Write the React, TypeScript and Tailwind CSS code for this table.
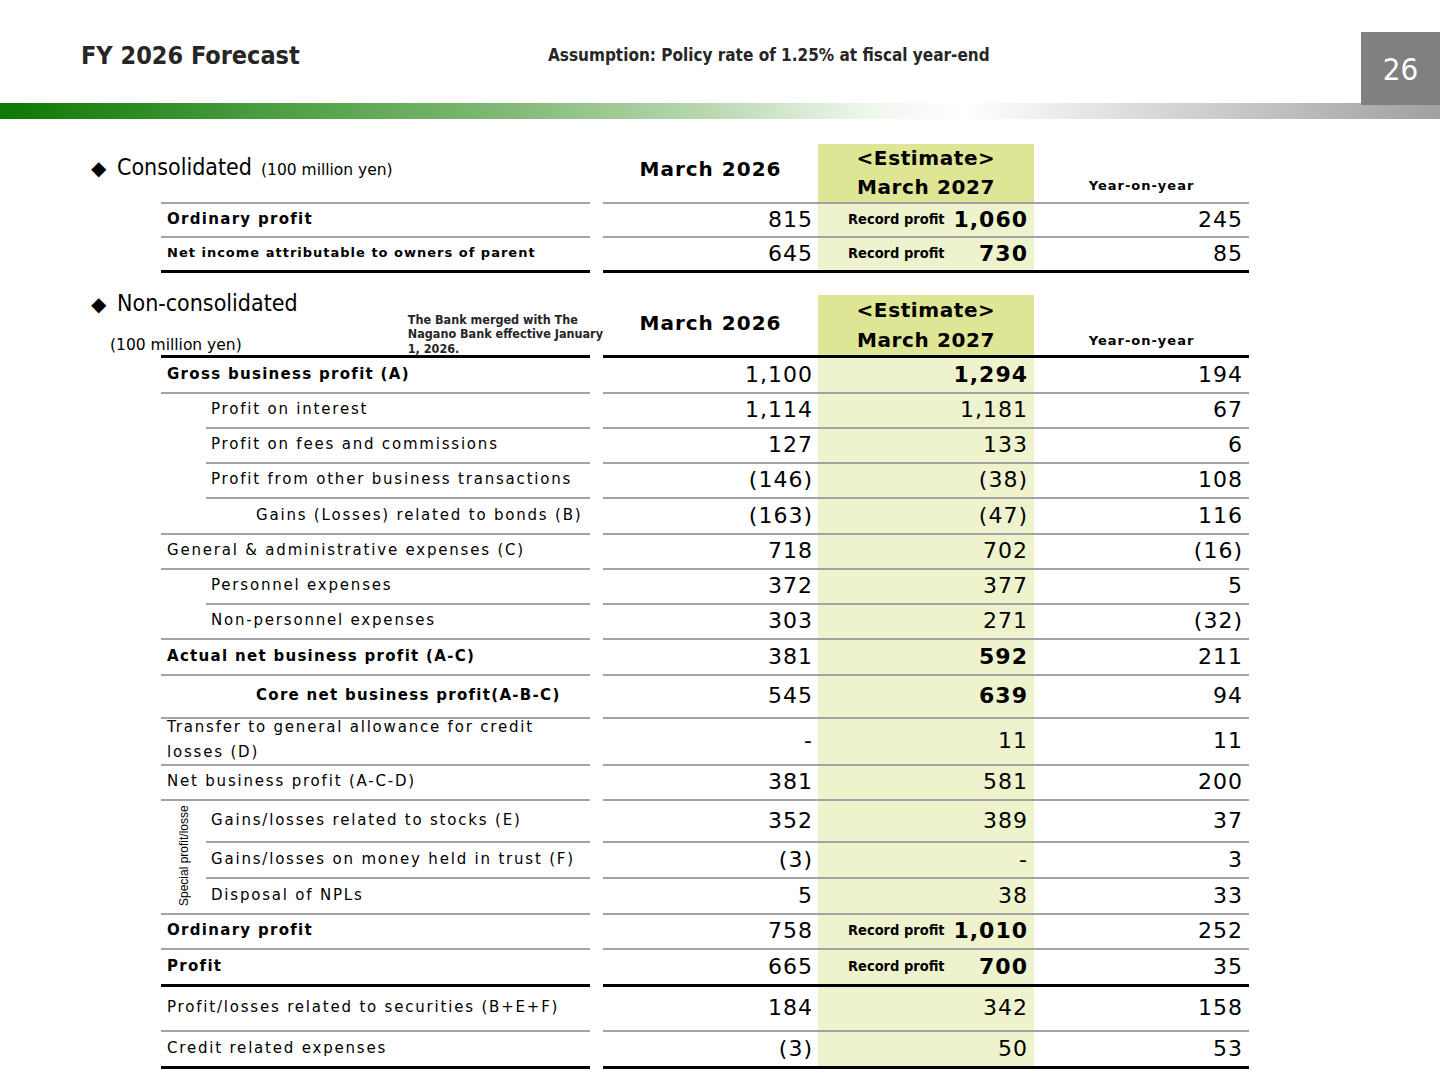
import React, { ReactNode } from "react";

const BODY = "font-['DejaVu_Sans',sans-serif]";
const COND = "font-['DejaVu_Sans_Condensed','DejaVu_Sans',sans-serif]";

type Sep = "g0" | "g45" | "b0";
type RowDef = {
  label: ReactNode;
  indent: 0 | 1 | 2;
  bold?: boolean;
  h: string;
  v: [string, string, string];
  bold2?: boolean;
  record?: boolean;
  sep: Sep;
  labelClass?: string;
};

function Separator({ kind }: { kind: Sep }) {
  const black = kind === "b0";
  return (
    <div className={black ? "flex h-[3px]" : "flex h-[2px]"}>
      <div className={kind === "g45" ? "flex-1 pl-[45px]" : "flex-1"}>
        <div className={black ? "h-full bg-black" : "h-full bg-[#a3a3a3]"} />
      </div>
      <div className="w-[13px]" />
      <div className={black ? "w-[646px] bg-black" : "w-[646px] bg-[#a3a3a3]"} />
    </div>
  );
}

function Row({ r, inGroup }: { r: RowDef; inGroup?: boolean }) {
  const indentCls = inGroup
    ? "pl-[5px]"
    : r.indent === 0
    ? "pl-[6px]"
    : r.indent === 1
    ? "pl-[50px]"
    : "pl-[95px]";
  const labelFont =
    r.labelClass ??
    (r.bold
      ? "text-[15px] font-bold tracking-[1.3px]"
      : "text-[15px] tracking-[1.8px]");
  return (
    <div className={`flex ${r.h}`}>
      <div className={`flex-1 flex items-center pb-[2px] ${indentCls} ${labelFont} text-black`}>
        {r.label}
      </div>
      <div className="w-[13px]" />
      <div className="w-[215px] flex items-center justify-end pr-[5px] pb-[2px] text-[22px] tracking-[1px] text-black">
        {r.v[0]}
      </div>
      <div
        className={
          r.record
            ? "w-[216px] bg-[#eef3ce] flex items-center justify-between pl-[30px] pr-[6px] pb-[2px] text-black"
            : "w-[216px] bg-[#eef3ce] flex items-center justify-end pr-[6px] pb-[2px] text-black"
        }
      >
        {r.record && (
          <span className={`${COND} text-[14.5px] font-bold tracking-[0px] pt-[1px]`}>
            Record profit
          </span>
        )}
        <span
          className={
            r.bold2
              ? "text-[22px] font-bold tracking-[1px]"
              : "text-[22px] tracking-[1px]"
          }
        >
          {r.v[1]}
        </span>
      </div>
      <div className="w-[215px] flex items-center justify-end pr-[6px] pb-[2px] text-[22px] tracking-[1px] text-black">
        {r.v[2]}
      </div>
    </div>
  );
}

const consolidated: RowDef[] = [
  {
    label: "Ordinary profit",
    indent: 0,
    bold: true,
    h: "h-[32px]",
    v: ["815", "1,060", "245"],
    bold2: true,
    record: true,
    sep: "g0",
  },
  {
    label: "Net income attributable to owners of parent",
    indent: 0,
    h: "h-[32px]",
    v: ["645", "730", "85"],
    bold2: true,
    record: true,
    sep: "b0",
    labelClass: "text-[13px] font-bold tracking-[1px]",
  },
];

const nonA: RowDef[] = [
  { label: "Gross business profit (A)", indent: 0, bold: true, h: "h-[34px]", v: ["1,100", "1,294", "194"], bold2: true, sep: "g0" },
  { label: "Profit on interest", indent: 1, h: "h-[33px]", v: ["1,114", "1,181", "67"], sep: "g45" },
  { label: "Profit on fees and commissions", indent: 1, h: "h-[33px]", v: ["127", "133", "6"], sep: "g45" },
  { label: "Profit from other business transactions", indent: 1, h: "h-[33px]", v: ["(146)", "(38)", "108"], sep: "g45" },
  { label: "Gains (Losses) related to bonds (B)", indent: 2, h: "h-[34px]", v: ["(163)", "(47)", "116"], sep: "g0" },
  { label: "General & administrative expenses (C)", indent: 0, h: "h-[33px]", v: ["718", "702", "(16)"], sep: "g0" },
  { label: "Personnel expenses", indent: 1, h: "h-[33px]", v: ["372", "377", "5"], sep: "g45" },
  { label: "Non-personnel expenses", indent: 1, h: "h-[33px]", v: ["303", "271", "(32)"], sep: "g0" },
  { label: "Actual net business profit (A-C)", indent: 0, bold: true, h: "h-[34px]", v: ["381", "592", "211"], bold2: true, sep: "g0" },
  { label: "Core net business profit(A-B-C)", indent: 2, bold: true, h: "h-[41px]", v: ["545", "639", "94"], bold2: true, sep: "g0" },
  {
    label: (
      <span className="leading-[25px] -mt-[2px]">
        Transfer to general allowance for credit
        <br />
        losses (D)
      </span>
    ),
    indent: 0,
    h: "h-[45px]",
    v: ["-", "11", "11"],
    sep: "g0",
  },
  { label: "Net business profit (A-C-D)", indent: 0, h: "h-[33px]", v: ["381", "581", "200"], sep: "g0" },
];

const special: RowDef[] = [
  { label: "Gains/losses related to stocks (E)", indent: 1, h: "h-[40px]", v: ["352", "389", "37"], sep: "g0" },
  { label: "Gains/losses on money held in trust (F)", indent: 1, h: "h-[34px]", v: ["(3)", "-", "3"], sep: "g0" },
  { label: "Disposal of NPLs", indent: 1, h: "h-[34px]", v: ["5", "38", "33"], sep: "g0" },
];

const nonB: RowDef[] = [
  { label: "Ordinary profit", indent: 0, bold: true, h: "h-[33px]", v: ["758", "1,010", "252"], bold2: true, record: true, sep: "g0" },
  { label: "Profit", indent: 0, bold: true, h: "h-[34px]", v: ["665", "700", "35"], bold2: true, record: true, sep: "b0" },
  { label: "Profit/losses related to securities (B+E+F)", indent: 0, h: "h-[43px]", v: ["184", "342", "158"], sep: "g0" },
  { label: "Credit related expenses", indent: 0, h: "h-[34px]", v: ["(3)", "50", "53"], sep: "b0" },
];

function Rows({ rows }: { rows: RowDef[] }) {
  return (
    <>
      {rows.map((r, i) => (
        <React.Fragment key={i}>
          <Row r={r} />
          <Separator kind={r.sep} />
        </React.Fragment>
      ))}
    </>
  );
}

export default function App() {
  return (
    <div className={`w-[1440px] h-[1080px] bg-white overflow-hidden ${BODY}`}>
      {/* Title bar */}
      <div className="flex h-[103px]">
        <div className={`w-[548px] pl-[81px] pt-[41px] ${COND} text-[25px] font-bold leading-[30px] text-[#262626]`}>
          FY 2026 Forecast
        </div>
        <div className={`pt-[46px] ${COND} text-[17px] font-bold leading-[18px] text-[#262626]`}>
          Assumption: Policy rate of 1.25% at fiscal year-end
        </div>
        <div className={`ml-auto mt-[32px] w-[79px] h-[73px] relative z-10 bg-[#808080] flex items-center justify-center pt-[2px] ${COND} text-[31px] text-white`}>
          26
        </div>
      </div>
      <div className="h-[16px] bg-[linear-gradient(to_right,#0d7803_0%,#4a9c40_18%,#80b975_35%,#bcdab4_50%,#eef6ec_60%,#ffffff_67%,#dedede_78%,#a0a0a0_100%)]" />

      {/* Consolidated */}
      <div className="pl-[92px]">
        <div className="flex h-[58px] mt-[25px]">
          <div className="w-[511px] pt-[10px]">
            <div className="flex items-baseline leading-[26px] text-black">
              <span className="w-[26px] text-[20px] -ml-[1px]">◆</span>
              <span className={`${COND} text-[23px]`}>Consolidated</span>
              <span className="ml-[9px] text-[15.5px]">(100 million yen)</span>
            </div>
          </div>
          <div className="w-[215px] pt-[14px] text-center text-[20px] font-bold tracking-[1px] leading-[22px] text-black">
            March 2026
          </div>
          <div className="w-[216px] bg-[#dee696] text-center text-[20px] font-bold tracking-[0.6px] leading-[29px] text-black">
            <div>&lt;Estimate&gt;</div>
            <div>March 2027</div>
          </div>
          <div className="w-[215px] flex items-end justify-center pb-[7px] text-[13px] font-bold tracking-[1px] text-black">
            Year-on-year
          </div>
        </div>
        <div className="ml-[69px] w-[1088px]">
          <Separator kind="g0" />
          <Rows rows={consolidated} />
        </div>

        {/* Non-consolidated */}
        <div className="flex h-[65px] mt-[17px]">
          <div className="w-[511px]">
            <div className="flex items-baseline leading-[26px] text-black">
              <span className="w-[26px] text-[20px] -ml-[1px]">◆</span>
              <span className={`${COND} text-[23px]`}>Non-consolidated</span>
            </div>
            <div className="flex items-end -mt-[5px] h-[44px]">
              <div className="w-[323px] pl-[18px] text-[15.5px] leading-[20px] pb-[1px] text-black">
                (100 million yen)
              </div>
              <div className={`${COND} whitespace-nowrap text-[12.5px] font-bold leading-[14.5px] text-[#262626]`}>
                The Bank merged with The
                <br />
                Nagano Bank effective January
                <br />
                1, 2026.
              </div>
            </div>
          </div>
          <div className="w-[215px] pt-[22px] text-center text-[20px] font-bold tracking-[1px] leading-[22px] text-black">
            March 2026
          </div>
          <div className="w-[216px] mt-[5px] bg-[#dee696] text-center text-[20px] font-bold tracking-[0.6px] leading-[30px] text-black">
            <div>&lt;Estimate&gt;</div>
            <div>March 2027</div>
          </div>
          <div className="w-[215px] flex items-end justify-center pb-[5px] text-[13px] font-bold tracking-[1px] text-black">
            Year-on-year
          </div>
        </div>
        <div className="ml-[69px] w-[1088px]">
          <Separator kind="b0" />
          <Rows rows={nonA} />
          <div className="flex h-[112px]">
            <div className="w-[45px] flex justify-center overflow-hidden">
              <span className="[writing-mode:vertical-rl] rotate-180 whitespace-nowrap pt-[7px] font-['Liberation_Sans',sans-serif] text-[12px] leading-[14px] text-black">
                Special profit/losse
              </span>
            </div>
            <div className="flex-1 flex flex-col">
              {special.map((r, i) => (
                <React.Fragment key={i}>
                  <Row r={r} inGroup />
                  {i < special.length - 1 && <Separator kind="g0" />}
                </React.Fragment>
              ))}
            </div>
          </div>
          <Separator kind="g0" />
          <Rows rows={nonB} />
        </div>
      </div>
    </div>
  );
}
